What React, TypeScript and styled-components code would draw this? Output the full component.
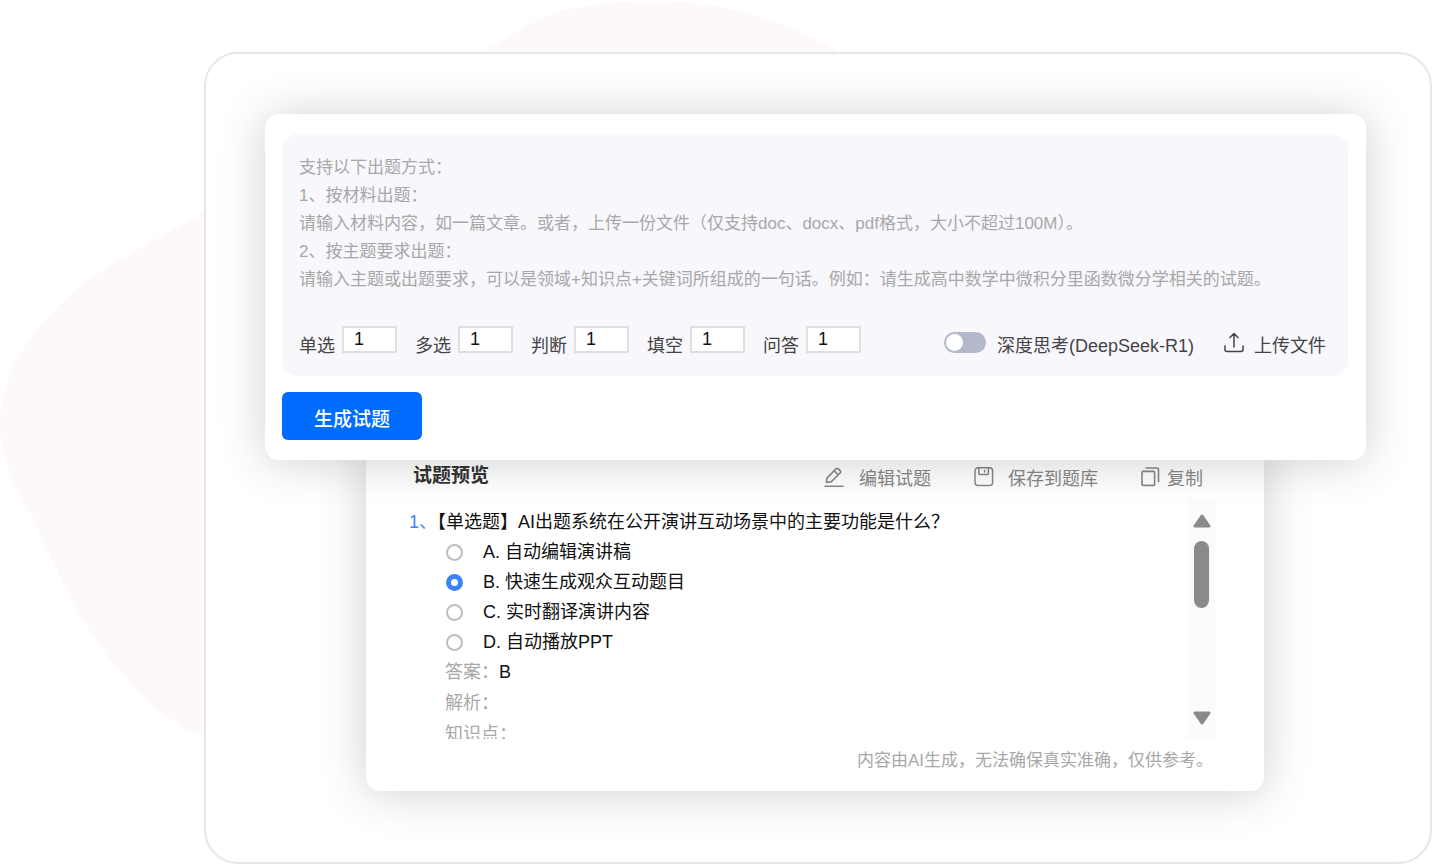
import React, { useState } from "react";
import styled, { createGlobalStyle } from "styled-components";

const Global = createGlobalStyle`
  *, *::before, *::after { box-sizing: border-box; }
  body {
    margin: 0;
    background: #fff;
    font-family: "Liberation Sans", "Noto Sans CJK SC", sans-serif;
    font-size: 18px;
    color: #111;
  }
  button, input, textarea { font: inherit; color: inherit; }
`;

const Page = styled.div`
  position: relative;
  min-height: 100vh;
  padding: 52px 0 0 204px;
  overflow: hidden;
`;

const Blob = styled.svg`
  position: absolute;
  top: 0;
  left: 0;
  pointer-events: none;
`;

const Frame = styled.main`
  position: relative;
  padding: 60px 64px 71px 59px;
  background: #fff;
  border: 2px solid #e6e6e6;
  border-radius: 34px;
`;

const Composer = styled.form`
  position: relative;
  z-index: 1;
  padding: 20px 18px 20px 17px;
  background: #fff;
  border-radius: 14px;
  box-shadow: 0 2px 48px rgba(0, 0, 0, 0.19);
`;

const PromptPanel = styled.div`
  padding: 20px 17px 18px;
  background: #f7f7fc;
  border-radius: 16px;
`;

const Prompt = styled.textarea`
  display: block;
  width: 100%;
  height: 140px;
  padding: 0;
  border: 0;
  outline: 0;
  resize: none;
  overflow: hidden;
  background: transparent;
  font-size: 17px;
  line-height: 28px;
  &::placeholder { color: #a8a8a8; opacity: 1; }
`;

const Controls = styled.div`
  display: flex;
  justify-content: space-between;
  margin-top: 32px;
  color: #444;
`;

const Counts = styled.div`
  display: flex;
  gap: 18px;
`;

const CountField = styled.label`
  display: flex;
  gap: 7px;
  line-height: 24px;
  white-space: nowrap;
`;

const Caption = styled.span`
  padding-top: 8px;
  line-height: 24px;
  white-space: nowrap;
`;

const CountInput = styled.input`
  width: 55px;
  height: 27px;
  padding: 0 0 0 10px;
  border: 2px solid #dfdfdf;
  background: #fff;
  color: #111;
  outline: 0;
`;

const Extras = styled.div`
  display: flex;
  gap: 30px;
  padding-right: 5px;
`;

const ThinkField = styled.label`
  display: flex;
  gap: 11px;
`;

const Switch = styled.input`
  appearance: none;
  width: 42px;
  height: 21px;
  margin: 6px 0 0;
  padding: 2px;
  border-radius: 11px;
  background: ${(p) => (p.checked ? "#006cff" : "#b3b9cb")};
  &::before {
    content: "";
    display: block;
    width: 17px;
    height: 17px;
    margin-left: ${(p) => (p.checked ? "21px" : "0")};
    border-radius: 50%;
    background: #fff;
  }
`;

const UploadButton = styled.button`
  display: flex;
  gap: 10px;
  padding: 0;
  border: 0;
  background: none;
  svg { margin-top: 6px; }
`;

const Submit = styled.button`
  display: block;
  width: 140px;
  height: 48px;
  margin-top: 16px;
  padding: 2px 0 0;
  border: 0;
  border-radius: 6px;
  background: #006cff;
  color: #fff;
  font-size: 19px;
  font-weight: 500;
`;

const Preview = styled.section`
  margin: -20px 102px 0 101px;
  padding: 20px 47px 17px 43px;
  background: #fff;
  border-radius: 14px;
  box-shadow: 0 2px 48px rgba(0, 0, 0, 0.19);
`;

const PreviewHead = styled.header`
  display: flex;
  justify-content: space-between;
  height: 39px;
  padding: 4px 14px 0 4px;
`;

const Title = styled.h2`
  margin: 0;
  font-size: 19px;
  line-height: 24px;
  color: #333;
`;

const Toolbar = styled.div`
  display: flex;
  gap: 43px;
`;

const Tool = styled.button<{ $gap: number }>`
  display: flex;
  gap: ${(p) => p.$gap}px;
  height: 30px;
  padding: 0;
  border: 0;
  background: none;
  color: #888;
  line-height: 30px;
  white-space: nowrap;
  svg { margin-top: 2px; }
`;

const Scroller = styled.div`
  display: flex;
  justify-content: space-between;
  height: 240px;
  overflow: hidden;
`;

const Question = styled.div`
  padding-top: 8px;
  line-height: 30px;
`;

const Stem = styled.p`
  margin: 0;
`;

const Index = styled.span`
  color: #3b82ff;
`;

const Option = styled.label`
  display: flex;
  align-items: center;
  gap: 20px;
  padding-left: 37px;
`;

const Radio = styled.input`
  appearance: none;
  width: 17px;
  height: 17px;
  margin: 1px 0 0;
  border-radius: 50%;
  border: 2px solid #bdbdbd;
  background: #fff;
  &:checked { border: 5px solid #3b82ff; }
`;

const Detail = styled.p`
  margin: 0;
  padding-left: 36px;
  line-height: 31px;
  color: #a8a8a8;
  b { font-weight: 400; color: #111; }
`;

const Track = styled.div`
  display: flex;
  flex-direction: column;
  align-items: center;
  width: 27px;
  padding: 15px 0 14px;
  margin-right: 2px;
  background: #fbfbfb;
`;

const Thumb = styled.div`
  width: 15px;
  height: 67px;
  margin: 13px 0 auto;
  border-radius: 8px;
  background: #8a8a8a;
`;

const Notice = styled.p`
  margin: 9px 4px 0 0;
  color: #a8a8a8;
  font-size: 17px;
  line-height: 26px;
  text-align: right;
`;

const placeholder = [
  "支持以下出题方式：",
  "1、按材料出题：",
  "请输入材料内容，如一篇文章。或者，上传一份文件（仅支持doc、docx、pdf格式，大小不超过100M）。",
  "2、按主题要求出题：",
  "请输入主题或出题要求，可以是领域+知识点+关键词所组成的一句话。例如：请生成高中数学中微积分里函数微分学相关的试题。",
].join("\n");

const kinds = ["单选", "多选", "判断", "填空", "问答"];

const options = [
  "A. 自动编辑演讲稿",
  "B. 快速生成观众互动题目",
  "C. 实时翻译演讲内容",
  "D. 自动播放PPT",
];

const stroke = {
  fill: "none",
  stroke: "currentColor",
  strokeLinecap: "round" as const,
  strokeLinejoin: "round" as const,
};

const UploadIcon = () => (
  <svg width="20" height="21" viewBox="0 0 20 21" {...stroke} strokeWidth="1.5" aria-hidden="true">
    <path d="M10 15V2M6 5.5 10 1.5 14 5.5M1 14v3.5q0 2 2 2h14q2 0 2-2V14" />
  </svg>
);

const EditIcon = () => (
  <svg width="20" height="22" viewBox="0 0 20 22" {...stroke} strokeWidth="1.6" aria-hidden="true">
    <path d="M1 20.2h18M2.8 12.4 12 2.7q1-1 2 0l2.3 2.1q1 1 0 2L7.4 15.6l-5 .9ZM10.2 4.8l3.9 3.9" />
  </svg>
);

const SaveIcon = () => (
  <svg width="20" height="22" viewBox="0 0 20 22" {...stroke} strokeWidth="1.5" aria-hidden="true">
    <rect x="1" y="1.8" width="17.6" height="17.6" rx="3" />
    <path d="M4.8 2v5.4q0 1 1 1h7.6q1 0 1-1V2M10.6 4.4v1.6" />
  </svg>
);

const CopyIcon = () => (
  <svg width="19" height="22" viewBox="0 0 19 22" {...stroke} strokeWidth="1.6" aria-hidden="true">
    <rect x="1" y="5.4" width="12.6" height="14" rx="1" />
    <path d="M5 2h11q1.5 0 1.5 1.5v12.3" />
  </svg>
);

const Arrow = ({ down = false }: { down?: boolean }) => (
  <svg width="18" height="14" viewBox="0 0 18 14" aria-hidden="true">
    <path
      d={down ? "M2 2h14L9 12Z" : "M2 12h14L9 2Z"}
      fill="#8a8a8a"
      stroke="#8a8a8a"
      strokeWidth="3"
      strokeLinejoin="round"
    />
  </svg>
);

export default function App() {
  const [deep, setDeep] = useState(false);
  const [choice, setChoice] = useState(1);

  return (
    <Page>
      <Global />
      <Blob width="900" height="760" viewBox="0 0 900 760" aria-hidden="true">
        <path
          fill="#fdf9f8"
          d="M485 52C520 28 545 15 565 10C610 0 650 0 680 2C750 7 805 30 842 54L842 735H204C165 724 130 688 98 643C72 604 55 566 36 525C20 492 0 465 0 425C0 370 38 318 88 280C130 250 170 234 204 212Z"
        />
      </Blob>
      <Frame>
        <Composer onSubmit={(e) => e.preventDefault()}>
          <PromptPanel>
            <Prompt aria-label="出题内容" placeholder={placeholder} />
            <Controls>
              <Counts>
                {kinds.map((kind) => (
                  <CountField key={kind}>
                    <Caption>{kind}</Caption>
                    <CountInput inputMode="numeric" defaultValue="1" />
                  </CountField>
                ))}
              </Counts>
              <Extras>
                <ThinkField>
                  <Switch
                    type="checkbox"
                    checked={deep}
                    onChange={(e) => setDeep(e.target.checked)}
                  />
                  <Caption>深度思考(DeepSeek-R1)</Caption>
                </ThinkField>
                <UploadButton type="button">
                  <UploadIcon />
                  <Caption>上传文件</Caption>
                </UploadButton>
              </Extras>
            </Controls>
          </PromptPanel>
          <Submit type="submit">生成试题</Submit>
        </Composer>

        <Preview>
          <PreviewHead>
            <Title>试题预览</Title>
            <Toolbar>
              <Tool type="button" $gap={15}>
                <EditIcon />
                编辑试题
              </Tool>
              <Tool type="button" $gap={14}>
                <SaveIcon />
                保存到题库
              </Tool>
              <Tool type="button" $gap={7}>
                <CopyIcon />
                复制
              </Tool>
            </Toolbar>
          </PreviewHead>
          <Scroller>
            <Question>
              <Stem>
                <Index>1、</Index>【单选题】AI出题系统在公开演讲互动场景中的主要功能是什么？
              </Stem>
              {options.map((text, i) => (
                <Option key={text}>
                  <Radio
                    type="radio"
                    name="answer"
                    checked={choice === i}
                    onChange={() => setChoice(i)}
                  />
                  {text}
                </Option>
              ))}
              <Detail>
                答案：<b>B</b>
              </Detail>
              <Detail>解析：</Detail>
              <Detail>知识点：</Detail>
            </Question>
            <Track>
              <Arrow />
              <Thumb />
              <Arrow down />
            </Track>
          </Scroller>
          <Notice>内容由AI生成，无法确保真实准确，仅供参考。</Notice>
        </Preview>
      </Frame>
    </Page>
  );
}
